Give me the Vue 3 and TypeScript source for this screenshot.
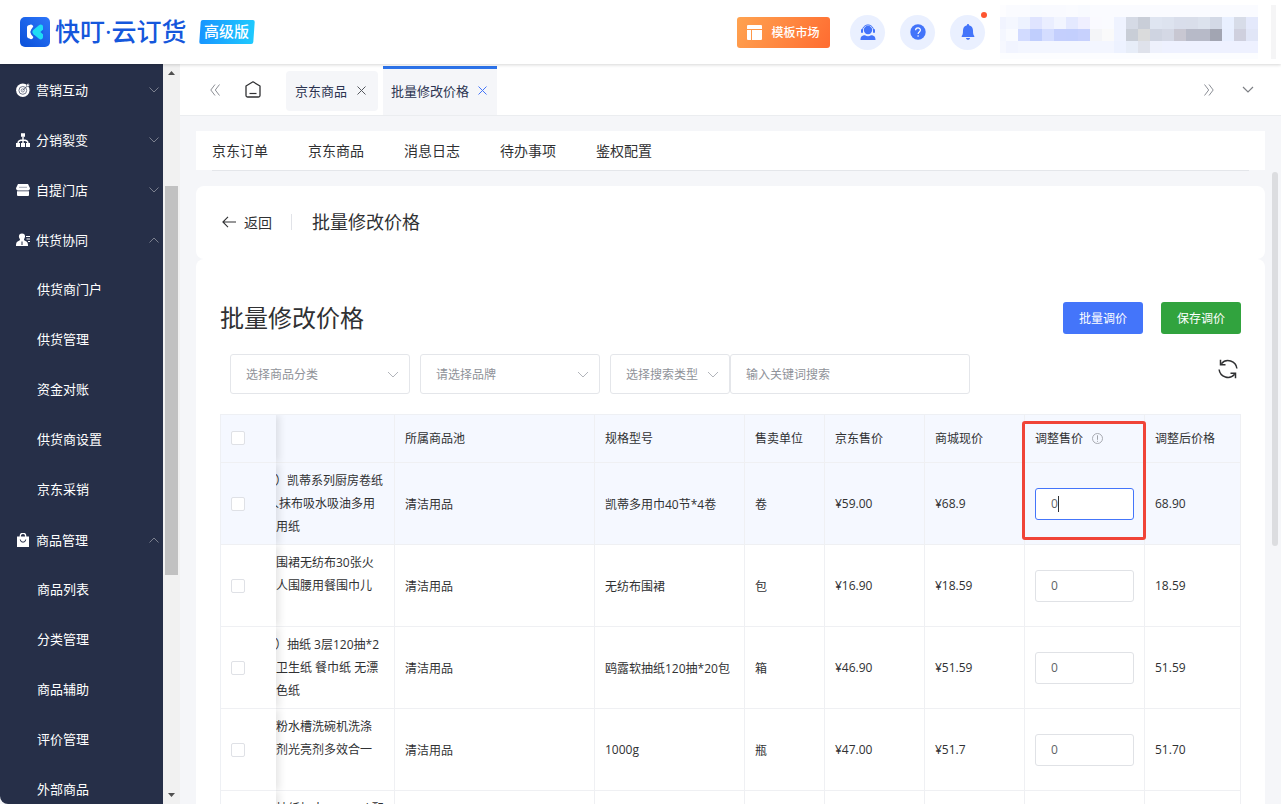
<script setup lang="ts">
import { onMounted, ref } from 'vue'

interface MenuItem { label: string; icon?: string; open?: boolean }
interface Row { name: string[]; pool: string; spec: string; unit: string; jd: string; mall: string; adjust: string; after: string }

const menu: MenuItem[] = [
  { label: '营销互动', icon: 'target' },
  { label: '分销裂变', icon: 'tree' },
  { label: '自提门店', icon: 'store' },
  { label: '供货协同', icon: 'user', open: true },
  { label: '供货商门户' },
  { label: '供货管理' },
  { label: '资金对账' },
  { label: '供货商设置' },
  { label: '京东采销' },
  { label: '商品管理', icon: 'bag', open: true },
  { label: '商品列表' },
  { label: '分类管理' },
  { label: '商品辅助' },
  { label: '评价管理' },
  { label: '外部商品' },
]

const subTabs = ['京东订单', '京东商品', '消息日志', '待办事项', '鉴权配置']

const rows = ref<Row[]>([
  { name: ['）凯蒂系列厨房卷纸', 'l人抹布吸水吸油多用', '房用纸'], pool: '清洁用品', spec: '凯蒂多用巾40节*4卷', unit: '卷', jd: '¥59.00', mall: '¥68.9', adjust: '0', after: '68.90' },
  { name: ['性围裙无纺布30张火', '成人围腰用餐围巾儿'], pool: '清洁用品', spec: '无纺布围裙', unit: '包', jd: '¥16.90', mall: '¥18.59', adjust: '0', after: '18.59' },
  { name: ['）抽纸 3层120抽*2', '纸卫生纸 餐巾纸 无漂', '本色纸'], pool: '清洁用品', spec: '鸥露软抽纸120抽*20包', unit: '箱', jd: '¥46.90', mall: '¥51.59', adjust: '0', after: '51.59' },
  { name: ['碗粉水槽洗碗机洗涤', '洁剂光亮剂多效合一'], pool: '清洁用品', spec: '1000g', unit: '瓶', jd: '¥47.00', mall: '¥51.7', adjust: '0', after: '51.70' },
  { name: ['洁抽纸加大 1200ml 配'], pool: '', spec: '', unit: '', jd: '', mall: '', adjust: '0', after: '' },
])

const mosaic: string[][] = [
  ['#fdfdff', '#fafbff', '#fafbff', '#f8faff', '#f9faff', '#f9faff', '#fafbff', '#f8faff', '#fafbff', '#fafbff', '#fafbff', '#fafbff', '#fafbff', '#fafbff', '#fafbff', '#fafbff', '#fafbff', '#fafbff', '#fafbff', '#fafbff', '#fafbff', '#fafbff'],
  ['#f1f4ff', '#f4f7ff', '#edf2ff', '#dfe4ff', '#eaeeff', '#f2f5ff', '#e4e9ff', '#efefff', '#fafaff', '#fafbff', '#eff3ff', '#d5dae5', '#c9ced8', '#dfe5f1', '#dde3ef', '#d9deeb', '#d9deea', '#dce2ed', '#d3d9e6', '#e9f0ff', '#d7dce8', '#e4e9fb'],
  ['#f4f7ff', '#f9fbff', '#d2dbff', '#c0cefd', '#d4ddff', '#c4cffd', '#c3cffd', '#c7d1fd', '#f4f5f8', '#fafafa', '#eff3ff', '#c9ced7', '#dadbdc', '#cfd4e1', '#d4d8e5', '#c8c7d2', '#b7bac8', '#b7bac8', '#a2a5b2', '#e8efff', '#cfd0de', '#e1e6f7'],
  ['#f6f8ff', '#f1f4ff', '#f3f6ff', '#f3f6ff', '#f3f6ff', '#f3f6ff', '#f3f6ff', '#f3f6ff', '#f3f6ff', '#f3f6ff', '#edf2ff', '#e7edf8', '#dfe2eb', '#eef1fc', '#eef1ff', '#eef1ff', '#eef1ff', '#eef1ff', '#eef1ff', '#eef1ff', '#eef1ff', '#eef1ff'],
]

const table = ref<HTMLTableElement | null>(null)
const focused = ref(0)
onMounted(() => {
  table.value?.querySelector<HTMLInputElement>('.price-input')?.focus()
})
</script>

<template>
  <div class="app">
    <header class="top">
      <svg class="logo" viewBox="0 0 30 30" aria-hidden="true">
        <defs>
          <linearGradient id="lg" x1="0" y1="1" x2="1" y2="0"><stop offset="0" stop-color="#0a50d8" /><stop offset="1" stop-color="#2d76fa" /></linearGradient>
        </defs>
        <rect width="30" height="30" rx="5" fill="url(#lg)" />
        <path d="M9.500 8a2.500 2.500 0 0 1 3.800 1.500L11.200 12.600a4 4 0 0 0 0 4.800l2.100 2.700A2.200 2.200 0 0 1 9.500 21.500C8 21.500 7 20.500 7 19V10.500C7 9 8 8 9.500 8z" fill="#fff" />
        <path d="M19 8.200C20.500 7 23 7.600 23 10v10c0 2.400-2.500 3-4 1.800l-5.500-4.600a3 3 0 0 1 0-4.400z" fill="#1edcf5" />
        <path d="M23.200 12.600 20.400 15l2.800 2.400z" fill="#1961e8" />
      </svg>
      <span class="brand">快叮·云订货</span>
      <span class="edition"><span class="edition-bg"></span><span class="edition-text">高级版</span></span>
      <div class="top-right">
        <button class="market" type="button">
          <svg viewBox="0 0 15 15" width="15" height="15" aria-hidden="true"><path d="M1 0h13a1 1 0 0 1 1 1v3H0V1a1 1 0 0 1 1-1zM0 5h4v10H1a1 1 0 0 1-1-1zM5 5h10v9a1 1 0 0 1-1 1H5z" fill="#fff" /></svg>
          模板市场
        </button>
        <button class="round" type="button" aria-label="客服">
          <svg viewBox="0 0 16 16" width="16" height="16"><circle cx="8" cy="6" r="4.200" fill="#4374fa" /><path d="M2.400 6.500a5.600 5.600 0 0 1 11.200 0" fill="none" stroke="#4374fa" /><rect x="1" y="5" width="2" height="4" rx="1" fill="#4374fa" /><rect x="13" y="5" width="2" height="4" rx="1" fill="#4374fa" /><path d="M.5 16c0-3.500 1.500-4.500 4.500-4.700Q8 13 11 11.300c3 .2 4.500 1.200 4.500 4.700z" fill="#4374fa" /></svg>
        </button>
        <button class="round" type="button" aria-label="帮助">
          <svg viewBox="0 0 16 16" width="16" height="16"><circle cx="8" cy="8" r="7.700" fill="#4374fa" /><path d="M5.600 6.300c0-3.200 4.800-3.100 4.800-.2 0 1.900-2.300 1.900-2.300 4" fill="none" stroke="#fff" stroke-width="1.200" /><circle cx="8.100" cy="12" r=".8" fill="#fff" /></svg>
        </button>
        <button class="round" type="button" aria-label="通知">
          <svg viewBox="0 0 16 16" width="16" height="16"><path d="M8 0c.8 0 1 .6 1 1.200 2.700.6 4 2.600 4 5.300 0 3.500.5 4.700 1.300 5.500V13H1.700v-1C2.500 11.200 3 10 3 6.500c0-2.700 1.300-4.700 4-5.300C7 .6 7.200 0 8 0zM6 14h4c0 2.400-4 2.400-4 0z" fill="#4374fa" /></svg>
          <i class="dot"></i>
        </button>
        <div class="account" aria-hidden="true">
          <div v-for="(line, i) in mosaic" :key="i" class="mosaic-line">
            <i v-for="(c, j) in line" :key="j" :style="{ background: c }"></i>
          </div>
        </div>
        <i class="edge"></i>
      </div>
    </header>

    <div class="body">
      <nav class="side">
        <a v-for="item in menu" :key="item.label" href="#" class="menu" :class="{ child: !item.icon }">
          <svg v-if="item.icon" class="mi" viewBox="0 0 14 14" aria-hidden="true">
            <template v-if="item.icon === 'target'">
              <circle cx="6.800" cy="7.200" r="6.700" fill="#fff" />
              <circle cx="6.800" cy="7.400" r="3.900" fill="none" stroke="#6d7487" stroke-width="1" />
              <circle cx="6.800" cy="7.400" r="1.600" fill="none" stroke="#6d7487" stroke-width=".8" />
              <path d="M6.800 7.400 11 3.200" stroke="#4a5268" stroke-width=".9" />
              <path d="m10.300 3.700.4-2L12.400 0l.2 1.500 1.400.2-1.700 1.700z" fill="#fff" stroke="#262f48" stroke-width=".4" />
            </template>
            <template v-else-if="item.icon === 'tree'">
              <path d="M5 .3h4v3.500H5zM0 10h4v4H0zM5 10h4v4H5zM10 10h4v4h-4z" fill="#fff" />
              <path d="M7 3.500V11M2 10.500C2 8 4 7 7 7s5 1 5 3.500" fill="none" stroke="#fff" stroke-width="1.400" />
            </template>
            <template v-else-if="item.icon === 'store'">
              <path d="M2 1h10l1.800 3.800a2 2 0 0 1-1.800 2.700H2A2 2 0 0 1 .2 4.800z" fill="#fff" />
              <path d="M1 8.300h12V12a1 1 0 0 1-1 1H2a1 1 0 0 1-1-1z" fill="#fff" />
              <path d="M3 4.300h8" stroke="#8d93a2" stroke-width=".8" />
            </template>
            <template v-else-if="item.icon === 'user'">
              <path d="M6 .5c3.500 0 3.600 3.300 2.200 5.400-.6 1 0 1.400 1.300 2C11.700 8.700 12 10 12 13H0c0-3 .3-4.300 2.500-5.100 1.300-.6 1.900-1 1.300-2C2.400 3.800 2.500.5 6 .5z" fill="#fff" />
              <path d="M10 3.500h4M10.500 6h3.500M12 8.500h2" stroke="#fff" stroke-width="1.200" />
              <path d="M6 8.500v3.500" stroke="#262f48" stroke-width="1" />
            </template>
            <template v-else>
              <path d="M1 3.500h12V14H1z" fill="#fff" />
              <path d="M4.300 4.500V3a2.700 2.700 0 0 1 5.400 0v1.500" fill="none" stroke="#fff" stroke-width="1.300" />
              <path d="M4.300 6.500a2.700 2.700 0 0 0 5.400 0" fill="none" stroke="#262f48" stroke-width="1" />
            </template>
          </svg>
          <span>{{ item.label }}</span>
          <svg v-if="item.icon" class="arrow" :class="{ up: item.open }" viewBox="0 0 10 6" aria-hidden="true"><path d="M.5.500 5 5 9.500.500" fill="none" stroke="#7b808e" stroke-width="1" /></svg>
        </a>
      </nav>
      <div class="scroll" aria-hidden="true">
        <svg viewBox="0 0 7 4"><path d="M0 4 3.500 0 7 4z" fill="#505050" /></svg>
        <i class="thumb"></i>
        <svg viewBox="0 0 7 4"><path d="M0 0h7L3.500 4z" fill="#505050" /></svg>
      </div>

      <main class="main">
        <div class="tabs">
          <button class="ib back" type="button" aria-label="向左"><svg viewBox="0 0 10 12" width="10" height="12"><path d="M5 .500.800 6 5 11.500M9.500.500 5.300 6l4.200 5.500" fill="none" stroke="#8c8f96" /></svg></button>
          <button class="ib home" type="button" aria-label="首页"><svg viewBox="0 0 16 17" width="16" height="17"><path d="M8 .800 1 5v9.500A1.500 1.500 0 0 0 2.500 16h11a1.500 1.500 0 0 0 1.500-1.500V5z" fill="none" stroke="#303133" stroke-width="1.300" stroke-linejoin="round" /><path d="M4.500 12.500h7" stroke="#303133" stroke-width="1.200" /></svg></button>
          <div class="tab"><a href="#">京东商品</a><button type="button" class="ib" aria-label="关闭京东商品"><svg viewBox="0 0 9 9" width="9" height="9"><path d="m.5.500 8 8m0-8-8 8" stroke="#55585e" /></svg></button></div>
          <div class="tab active"><a href="#">批量修改价格</a><button type="button" class="ib" aria-label="关闭批量修改价格"><svg viewBox="0 0 9 9" width="9" height="9"><path d="m.5.500 8 8m0-8-8 8" stroke="#4475fa" /></svg></button></div>
          <div class="tabs-end">
            <button class="ib" type="button" aria-label="向右"><svg viewBox="0 0 10 12" width="10" height="12"><path d="M.500.500 4.700 6 .500 11.500M5 .500 9.200 6 5 11.500" fill="none" stroke="#8c8f96" /></svg></button>
            <button class="ib" type="button" aria-label="更多"><svg viewBox="0 0 12 7" width="12" height="7"><path d="m1 1 5 5 5-5" fill="none" stroke="#7d7f84" stroke-width="1.200" /></svg></button>
          </div>
        </div>

        <div class="content">
          <div class="subnav"><div class="subnav-in"><a v-for="t in subTabs" :key="t" href="#">{{ t }}</a></div></div>

          <section class="card head">
            <a href="#" class="return"><svg viewBox="0 0 14 12" width="14" height="12"><path d="M14 6H1M6 .800.900 6 6 11.200" fill="none" stroke="#303133" stroke-width="1.100" /></svg>返回</a>
            <i class="sep"></i>
            <h2>批量修改价格</h2>
          </section>

          <section class="card panel">
            <div class="title-row">
              <h1>批量修改价格</h1>
              <button type="button" class="btn blue">批量调价</button>
              <button type="button" class="btn green">保存调价</button>
            </div>
            <div class="filters">
              <label class="sel"><select aria-label="选择商品分类"><option>选择商品分类</option></select><svg viewBox="0 0 12 7"><path d="m1 1 5 5 5-5" fill="none" stroke="#b2b5bb" /></svg></label>
              <label class="sel"><select aria-label="请选择品牌"><option>请选择品牌</option></select><svg viewBox="0 0 12 7"><path d="m1 1 5 5 5-5" fill="none" stroke="#b2b5bb" /></svg></label>
              <div class="group">
                <label class="sel small"><select aria-label="选择搜索类型"><option>选择搜索类型</option></select><svg viewBox="0 0 12 7"><path d="m1 1 5 5 5-5" fill="none" stroke="#b2b5bb" /></svg></label>
                <input class="kw" type="text" placeholder="输入关键词搜索" aria-label="关键词">
              </div>
              <button class="ib refresh" type="button" aria-label="刷新"><svg viewBox="0 0 20 20" width="20" height="20"><path d="M3.300 4.800A8.900 8.900 0 0 1 18.900 9.500M16.700 15.200A8.900 8.900 0 0 1 1.100 10.500" fill="none" stroke="#303133" stroke-width="1.500" /><path d="M2.500.800v5h5M17.500 19.200v-5h-5" fill="none" stroke="#303133" stroke-width="1.500" /></svg></button>
            </div>

            <table ref="table">
              <colgroup><col class="c55"><col class="c119"><col class="c200"><col class="c150"><col class="c80"><col class="c100"><col class="c100"><col class="c120"><col></colgroup>
              <thead>
                <tr>
                  <th class="fix"><input type="checkbox" aria-label="全选"></th>
                  <th></th><th>所属商品池</th><th>规格型号</th><th>售卖单位</th><th>京东售价</th><th>商城现价</th>
                  <th class="adj">调整售价<svg class="info" viewBox="0 0 11 11"><circle cx="5.500" cy="5.500" r="5" fill="none" stroke="#a0a3a9" stroke-width=".9" /><path d="M5.500 2.300v4.500M5.500 7.800v1" stroke="#a0a3a9" /></svg><i class="mark"></i></th>
                  <th>调整后价格</th>
                </tr>
              </thead>
              <tbody>
                <tr v-for="(r, i) in rows" :key="i" :class="{ hover: i === 0 }">
                  <td class="fix"><input type="checkbox" :aria-label="'选择第' + (i + 1) + '行'"></td>
                  <td class="name"><div class="lines"><div v-for="(l, k) in r.name" :key="k" :class="{ open: l.startsWith('）') }">{{ l }}</div></div></td>
                  <td>{{ r.pool }}</td>
                  <td>{{ r.spec }}</td>
                  <td>{{ r.unit }}</td>
                  <td>{{ r.jd }}</td>
                  <td>{{ r.mall }}</td>
                  <td>
                    <div class="price">
                      <input v-model="r.adjust" class="price-input" type="text" :aria-label="'第' + (i + 1) + '行调整售价'" @focus="focused = i" @blur="focused = -1">
                      <span v-if="focused === i" class="caret-line" aria-hidden="true"></span>
                    </div>
                  </td>
                  <td>{{ r.after }}</td>
                </tr>
              </tbody>
            </table>
          </section>
        </div>
        <i class="page-thumb"></i>
      </main>
    </div>
  </div>
</template>

<style>
body { overflow: hidden; }
</style>

<style scoped>
* { box-sizing: border-box; }
.app { height: 100vh; display: flex; flex-direction: column; overflow: hidden; font-family: "Open Sans", "Noto Sans CJK SC", sans-serif; font-size: 12px; color: #303133; background: #f5f6f9; }
a { color: inherit; text-decoration: none; }
button { font-family: inherit; border: 0; padding: 0; background: none; cursor: pointer; }
svg { display: block; flex: none; }
h1, h2 { margin: 0; font-weight: 400; }

.top { position: relative; z-index: 5; flex: none; height: 64px; padding: 0 5px 0 20px; display: flex; align-items: center; background: #fff; box-shadow: 0 1px 3px rgba(0, 0, 0, .16); }
.logo { width: 30px; height: 30px; }
.brand { margin-left: 5px; padding-bottom: 2px; font-size: 25px; line-height: 32px; font-weight: 500; color: #1557dc; white-space: nowrap; }
.edition { position: relative; margin-left: 13px; width: 54px; height: 24px; display: flex; align-items: center; justify-content: center; }
.edition-bg { position: absolute; inset: 0; border-radius: 2px; background: linear-gradient(90deg, #1795ff, #1fc9fe); transform: skewX(-4deg); }
.edition-text { position: relative; padding-bottom: 2px; font-size: 15px; line-height: 24px; font-weight: 500; color: #fff; }
.top-right { margin-left: auto; display: flex; align-items: center; }
.market { width: 93px; height: 31px; margin-right: 20px; display: flex; align-items: center; justify-content: center; gap: 9px; border-radius: 3px; background: linear-gradient(120deg, #ffa350, #ff6c31); color: #fff; font-size: 12px; font-weight: 500; white-space: nowrap; }
.round { position: relative; width: 35px; height: 35px; margin-right: 15px; display: flex; align-items: center; justify-content: center; border-radius: 50%; background: #eaf0ff; }
.dot { position: absolute; right: -2px; top: -3px; width: 6px; height: 6px; border-radius: 50%; background: #fd5530; }
.account { width: 258px; height: 54px; background: #fcfdff; }
.mosaic-line { height: 12px; display: grid; grid-template-columns: 1fr repeat(21, 12px); }
.edge { width: 5px; height: 54px; margin-left: 13px; background: #f5f5f6; }

.body { flex: 1; min-height: 0; display: flex; }
.side { width: 163px; flex: none; background: #262f48; border-bottom-left-radius: 8px; overflow: hidden; color: #fff; font-size: 13px; }
.menu { height: 50px; padding: 2px 4px 0 16px; display: flex; align-items: center; }
.menu.child { padding: 0 0 0 37px; }
.menu span { padding-bottom: 2px; }
.mi { width: 14px; height: 14px; margin-right: 6px; }
.arrow { width: 10px; height: 6px; margin-left: auto; }
.arrow.up { transform: rotate(180deg); }
.scroll { width: 17px; flex: none; padding: 7px 2px 7px 2px; background: #f1f1f1; display: flex; flex-direction: column; }
.scroll svg { width: 7px; height: 4px; margin-left: 3px; }
.thumb { margin: 111px 0 auto 0; width: 13px; height: 389px; background: #c1c1c1; }

.main { position: relative; flex: 1; min-width: 0; overflow: hidden; }
.page-thumb { position: absolute; right: 3px; top: 108px; width: 6px; height: 374px; border-radius: 3px; background: #dcdde0; }
.ib { display: inline-flex; align-items: center; justify-content: center; }
.tabs { height: 52px; padding-left: 30px; display: flex; align-items: center; background: #fff; border-bottom: 1px solid #ebedf0; }
.home { margin: 0 25px 0 25px; }
.tab { height: 40px; width: 92px; margin: 2px 5px 0 0; padding: 0 12px 0 9px; display: flex; align-items: center; justify-content: space-between; border-radius: 4px; background: #f5f6f9; font-size: 13px; color: #2b3350; white-space: nowrap; }
.tab a { padding-bottom: 1px; }
.tab.active { width: 114px; height: 49px; margin: 2px 0 0; padding: 0 10px 3px 8px; border-top: 3px solid #2d73ea; border-radius: 0; }
.tabs-end { margin-left: auto; margin-right: 27px; display: flex; align-items: center; gap: 28px; }

.content { padding: 15px 16px 0; }
.subnav { height: 40px; padding: 0 16px; background: linear-gradient(#fff 39px, transparent 39px); }
.subnav-in { height: 40px; padding-bottom: 2px; display: flex; align-items: center; gap: 40px; border-bottom: 1px solid #e4e6ea; font-size: 14px; }
.card { background: #fff; border-radius: 8px; }
.head { margin-top: 15px; height: 73px; padding: 0 26px 1px; display: flex; align-items: center; }
.return { display: flex; align-items: center; gap: 8px; font-size: 14px; }
.sep { width: 1px; height: 16px; margin: 0 20px 0 19px; background: #e1e3e8; }
h2 { font-size: 18px; line-height: 28px; }
.panel { padding: 40px 24px 0; min-height: 560px; }
.title-row { display: flex; align-items: center; height: 38px; }
h1 { font-size: 24px; line-height: 36px; margin-right: auto; }
.btn { width: 80px; height: 32px; border-radius: 3px; color: #fff; font-size: 12px; }
.blue { background: #4475fa; }
.green { margin-left: 18px; background: #31a33e; }
.filters { display: flex; gap: 10px; padding: 17px 3px 20px 10px; }
.sel { position: relative; width: 180px; height: 40px; }
.sel select, .kw { width: 100%; height: 40px; padding: 0 15px; border: 1px solid #e4e6ea; border-radius: 3px; background: #fff; appearance: none; font: 12px "Open Sans", "Noto Sans CJK SC", sans-serif; color: #8f9299; outline: 0; }
.kw::placeholder { color: #8f9299; }
.sel svg { position: absolute; right: 11px; top: 17px; width: 12px; height: 7px; pointer-events: none; }
.group { display: flex; }
.small { width: 120px; }
.kw { width: 240px; }
.refresh { margin-left: auto; height: 30px; }

table { width: 100%; table-layout: fixed; border-collapse: separate; border-spacing: 0; border-top: 1px solid #eef0f4; border-left: 1px solid #eef0f4; }
.c55 { width: 55px; } .c119 { width: 119px; } .c200 { width: 200px; } .c150 { width: 150px; } .c80 { width: 80px; } .c100 { width: 100px; } .c120 { width: 120px; }
th, td { padding: 0 10px; text-align: left; font-weight: 400; border-right: 1px solid #eff0f3; border-bottom: 1px solid #eff0f3; background: #fff; white-space: nowrap; }
th { height: 48px; padding-bottom: 1px; color: #303133; }
td { height: 82px; }
th, .hover td { background: #f5f8ff; }
.fix { position: relative; z-index: 1; border-right: 0; box-shadow: 3px 0 8px rgba(0, 0, 0, .11); clip-path: inset(0 -10px 0 0); }
.name { vertical-align: top; padding-top: 6px; }
.lines { margin-left: -22px; line-height: 23px; }
.lines .open { padding-left: 11px; }
input[type=checkbox] { appearance: none; display: block; width: 14px; height: 14px; margin: 0; border: 1px solid #dfe1e6; border-radius: 2px; background: #fff; }
.adj { position: relative; }
.info { display: inline-block; width: 11px; height: 11px; margin-left: 9px; vertical-align: -1px; }
.mark { position: absolute; z-index: 2; left: -3px; top: 6px; width: 124px; height: 119px; border: 3px solid #f04438; border-radius: 3px; pointer-events: none; }
.price { position: relative; }
.price-input { display: block; width: 99px; height: 32px; padding: 0 15px; border: 1px solid #e0e2e6; border-radius: 3px; background: #fff; font: 12px "Open Sans", sans-serif; color: #606266; caret-color: transparent; outline: 0; }
.price-input:focus { border-color: #4475fa; }
.caret-line { position: absolute; left: 23px; top: 8px; width: 1px; height: 16px; background: #303133; pointer-events: none; }
</style>
